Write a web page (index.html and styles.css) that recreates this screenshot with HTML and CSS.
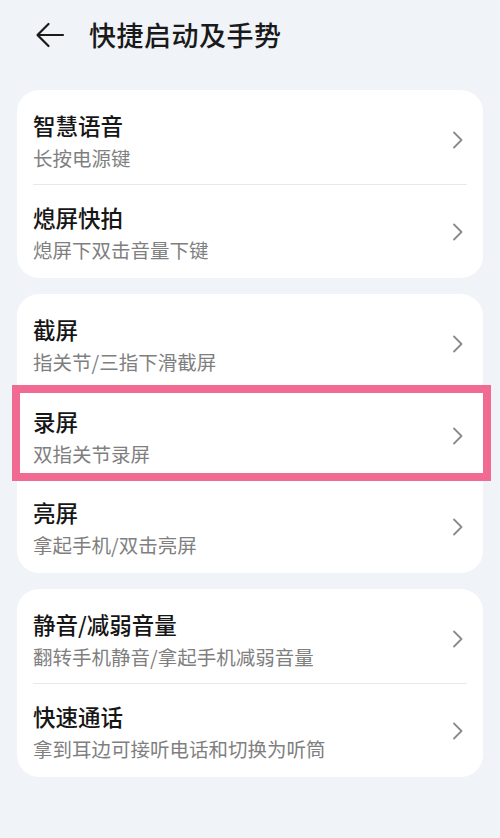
FILE: index.html
```html
<!DOCTYPE html>
<html lang="zh-CN">
<head>
<meta charset="utf-8">
<title>快捷启动及手势</title>
<link rel="stylesheet" href="styles.css">
</head>
<body>
<div class="page">
  <header class="header">
    <svg class="back" width="30" height="26" viewBox="0 0 30 26" aria-hidden="true">
      <path d="M2.5 13 H28 M13.5 2 L2.5 13 L13.5 24" fill="none" stroke="#1a1a1a" stroke-width="2.2" stroke-linecap="round" stroke-linejoin="round"/>
    </svg>
    <h1 class="title">快捷启动及手势</h1>
  </header>

  <main class="list">
    <section class="card">
      <div class="row">
        <div class="row-inner">
          <div class="texts"><div class="name">智慧语音</div><div class="desc">长按电源键</div></div>
          <svg class="chev" width="12" height="18" viewBox="0 0 12 18"><path d="M2 1.5 L9.5 9 L2 16.5" fill="none" stroke="#8a8a8a" stroke-width="1.8" stroke-linecap="round" stroke-linejoin="round"/></svg>
        </div>
      </div>
      <div class="row">
        <div class="row-inner">
          <div class="texts"><div class="name">熄屏快拍</div><div class="desc">熄屏下双击音量下键</div></div>
          <svg class="chev" width="12" height="18" viewBox="0 0 12 18"><path d="M2 1.5 L9.5 9 L2 16.5" fill="none" stroke="#8a8a8a" stroke-width="1.8" stroke-linecap="round" stroke-linejoin="round"/></svg>
        </div>
      </div>
    </section>

    <section class="card">
      <div class="row">
        <div class="row-inner">
          <div class="texts"><div class="name">截屏</div><div class="desc">指关节/三指下滑截屏</div></div>
          <svg class="chev" width="12" height="18" viewBox="0 0 12 18"><path d="M2 1.5 L9.5 9 L2 16.5" fill="none" stroke="#8a8a8a" stroke-width="1.8" stroke-linecap="round" stroke-linejoin="round"/></svg>
        </div>
      </div>
      <div class="row highlighted">
        <div class="row-inner">
          <div class="texts"><div class="name">录屏</div><div class="desc">双指关节录屏</div></div>
          <svg class="chev" width="12" height="18" viewBox="0 0 12 18"><path d="M2 1.5 L9.5 9 L2 16.5" fill="none" stroke="#8a8a8a" stroke-width="1.8" stroke-linecap="round" stroke-linejoin="round"/></svg>
        </div>
        <div class="mark"></div>
      </div>
      <div class="row">
        <div class="row-inner">
          <div class="texts"><div class="name">亮屏</div><div class="desc">拿起手机/双击亮屏</div></div>
          <svg class="chev" width="12" height="18" viewBox="0 0 12 18"><path d="M2 1.5 L9.5 9 L2 16.5" fill="none" stroke="#8a8a8a" stroke-width="1.8" stroke-linecap="round" stroke-linejoin="round"/></svg>
        </div>
      </div>
    </section>

    <section class="card">
      <div class="row">
        <div class="row-inner">
          <div class="texts"><div class="name">静音/减弱音量</div><div class="desc">翻转手机静音/拿起手机减弱音量</div></div>
          <svg class="chev" width="12" height="18" viewBox="0 0 12 18"><path d="M2 1.5 L9.5 9 L2 16.5" fill="none" stroke="#8a8a8a" stroke-width="1.8" stroke-linecap="round" stroke-linejoin="round"/></svg>
        </div>
      </div>
      <div class="row">
        <div class="row-inner">
          <div class="texts"><div class="name">快速通话</div><div class="desc">拿到耳边可接听电话和切换为听筒</div></div>
          <svg class="chev" width="12" height="18" viewBox="0 0 12 18"><path d="M2 1.5 L9.5 9 L2 16.5" fill="none" stroke="#8a8a8a" stroke-width="1.8" stroke-linecap="round" stroke-linejoin="round"/></svg>
        </div>
      </div>
    </section>
  </main>
</div>
</body>
</html>
```

FILE: styles.css
```css
html, body {
  margin: 0;
  padding: 0;
  background: #f0f3f7;
}

body {
  font-family: "Noto Sans CJK SC", "Noto Sans", sans-serif;
  color: #1a1a1a;
  width: 500px;
  height: 838px;
  overflow: hidden;
}

.page {
  display: flex;
  flex-direction: column;
}

.header {
  height: 70px;
  display: flex;
  align-items: center;
  padding-left: 35px;
  gap: 24px;
}

.back {
  display: block;
  flex: none;
}

.title {
  margin: 0;
  font-size: 27px;
  font-weight: 500;
  letter-spacing: 0.5px;
  line-height: 36px;
  color: #1a1a1a;
}

.list {
  display: flex;
  flex-direction: column;
  gap: 16px;
  padding: 20px 17px 0;
}

.card {
  background: #ffffff;
  border-radius: 22px;
  padding: 3px 0;
}

.row {
  position: relative;
  padding: 0 16px;
}

.row-inner {
  height: 91px;
  box-sizing: border-box;
  display: flex;
  align-items: flex-start;
  justify-content: space-between;
  padding-top: 17px;
  border-top: 1px solid #e6e8eb;
}

.row:first-child .row-inner {
  border-top: none;
}

.texts {
  display: flex;
  flex-direction: column;
}

.name {
  font-size: 22.5px;
  line-height: 30px;
  font-weight: 500;
  color: #161616;
}

.desc {
  margin-top: 5px;
  font-size: 19.5px;
  line-height: 26px;
  color: #7f7f7f;
}

.chev {
  display: block;
  flex: none;
  align-self: center;
  margin-right: 3px;
  margin-top: -14px;
}

.mark {
  position: absolute;
  z-index: 2;
  top: -3px;
  bottom: -2px;
  left: -5px;
  right: -8px;
  border: 8px solid #f06a92;
  pointer-events: none;
}
```
